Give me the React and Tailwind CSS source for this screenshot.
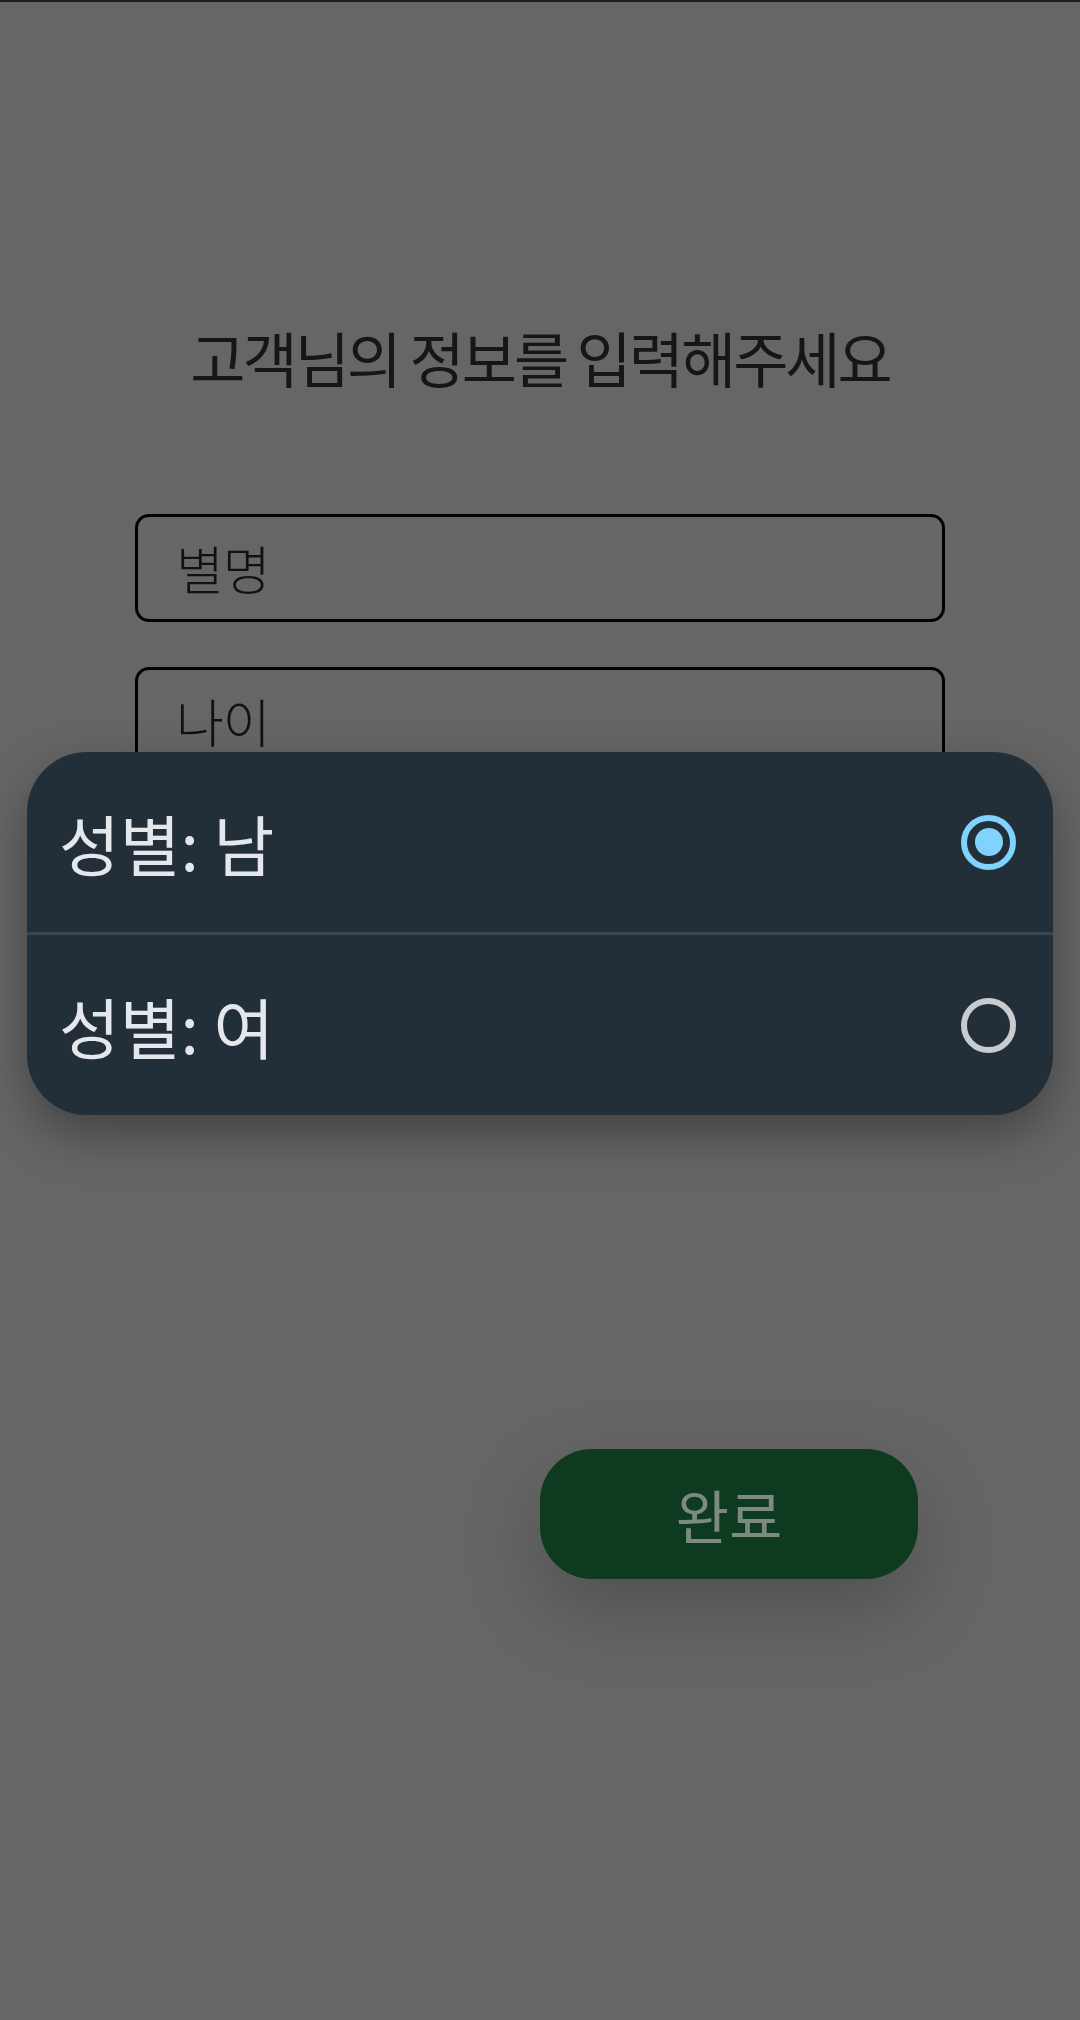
import { useState } from 'react';

const OPTIONS = [
  { id: 'm', label: '성별: 남' },
  { id: 'f', label: '성별: 여' },
];

function Radio({ checked }) {
  return (
    <span
      className={`flex h-[55px] w-[55px] items-center justify-center rounded-full border-[6px] ${
        checked ? 'border-[#7fd3fc]' : 'border-[#c8ccd1]'
      }`}
    >
      {checked && <span className="h-[28px] w-[28px] rounded-full bg-[#7fd3fc]" />}
    </span>
  );
}

export default function App() {
  const [gender, setGender] = useState('m');

  return (
    <div className="relative h-[2020px] w-[1080px] overflow-hidden bg-[#666666] font-['Noto_Sans_CJK_KR','Noto_Sans',sans-serif]">
      <div className="h-[2px] bg-[#1f1f1f]" />

      <h1 className="mt-[320px] text-center text-[60px] leading-[70px] font-normal tracking-[-0.05em] text-[#161616]">
        고객님의 정보를 입력해주세요
      </h1>

      <div className="mx-[135px] mt-[122px] flex h-[108px] items-center rounded-[14px] border-[3px] border-black px-[38px]">
        <span className="text-[52px] leading-none font-light tracking-[-0.02em] text-[#111111]">별명</span>
      </div>
      <div className="mx-[135px] mt-[45px] flex h-[108px] items-center rounded-[14px] border-[3px] border-black px-[38px]">
        <span className="text-[52px] leading-none font-light tracking-[-0.02em] text-[#111111]">나이</span>
      </div>

      <div className="mt-[674px] ml-[540px] flex h-[130px] w-[378px] items-center justify-center rounded-[52px] bg-[#0e3a1f] shadow-[0_30px_80px_rgba(0,0,0,0.22)]">
        <span className="text-[58px] leading-none text-[#7c8a80]">완료</span>
      </div>

      {/* dialog over the dimmed form */}
      <div className="absolute inset-0 px-[27px] pt-[752px]">
        <div className="overflow-hidden rounded-[60px] bg-[#232f38] shadow-[0_20px_50px_rgba(0,0,0,0.35)]">
          {OPTIONS.map((o, i) => (
            <div key={o.id}>
              {i > 0 && <div className="h-[3px] bg-[#3a4650]" />}
              <button
                type="button"
                onClick={() => setGender(o.id)}
                className="flex h-[180px] w-full items-center justify-between pl-[32px] pr-[37px]"
              >
                <span className="text-[66px] leading-none text-[#e4e7eb]">{o.label}</span>
                <Radio checked={gender === o.id} />
              </button>
            </div>
          ))}
        </div>
      </div>
    </div>
  );
}
